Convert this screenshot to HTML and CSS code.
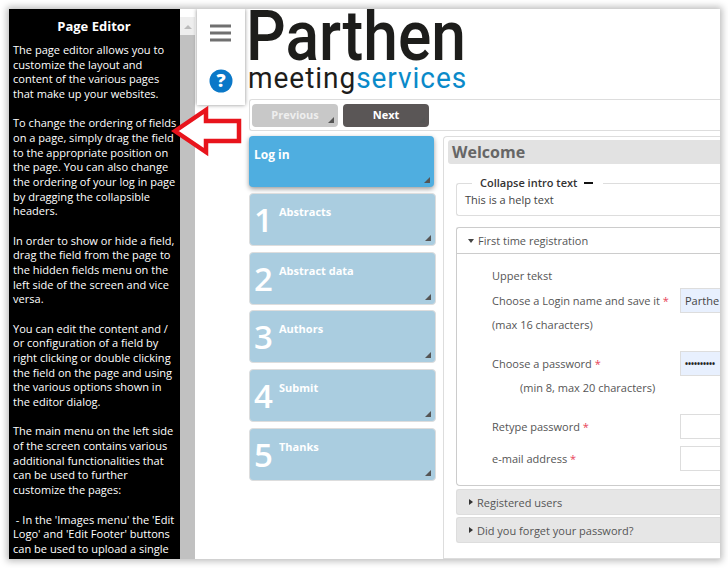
FILE: index.html
```html
<!DOCTYPE html>
<html lang="en">
<head>
<meta charset="utf-8">
<title>Page Editor</title>
<link rel="stylesheet" href="styles.css">
</head>
<body>
<div class="shot">
  <aside class="editor">
    <h1 class="editor-title">Page Editor</h1>
    <p class="editor-text">The page editor allows you to<br>customize the layout and<br>content of the various pages<br>that make up your websites.<br><br>To change the ordering of fields<br>on a page, simply drag the field<br>to the appropriate position on<br>the page. You can also change<br>the ordering of your log in page<br>by dragging the collapsible<br>headers.<br><br>In order to show or hide a field,<br>drag the field from the page to<br>the hidden fields menu on the<br>left side of the screen and vice<br>versa.<br><br>You can edit the content and /<br>or configuration of a field by<br>right clicking or double clicking<br>the field on the page and using<br>the various options shown in<br>the editor dialog.<br><br>The main menu on the left side<br>of the screen contains various<br>additional functionalities that<br>can be used to further<br>customize the pages:<br><br>&nbsp;- In the 'Images menu' the 'Edit<br>Logo' and 'Edit Footer' buttons<br>can be used to upload a single</p>
  </aside>
  <div class="scrollbar">
    <div class="scroll-up"></div>
    <div class="scroll-thumb"></div>
  </div>
  <div class="toolbar">
    <div class="tool tool-menu">
      <svg width="22" height="18" viewBox="0 0 22 18"><path d="M0 2h21M0 9h21M0 16h21" stroke="#707070" stroke-width="3"/></svg>
    </div>
    <div class="tool">
      <svg width="24" height="24" viewBox="0 0 24 24"><circle cx="12" cy="12" r="11.5" fill="#0a78c8"/><text x="12" y="18" class="help-mark" text-anchor="middle">?</text></svg>
    </div>
  </div>
  <div class="page">
    <header class="logo">
      <div class="logo-name">Parthen</div>
      <div class="logo-sub">meeting<span class="logo-blue">services</span></div>
    </header>
    <div class="pager">
      <div class="pager-btn pager-prev">Previous<i class="grip"></i></div>
      <div class="pager-btn pager-next">Next<i class="grip"></i></div>
    </div>
    <div class="columns">
      <nav class="steps">
        <div class="step step-active"><span class="step-label">Log in</span><i class="grip"></i></div>
        <div class="step"><span class="step-num">1</span><span class="step-label">Abstracts</span><i class="grip"></i></div>
        <div class="step"><span class="step-num">2</span><span class="step-label">Abstract data</span><i class="grip"></i></div>
        <div class="step"><span class="step-num">3</span><span class="step-label">Authors</span><i class="grip"></i></div>
        <div class="step"><span class="step-num">4</span><span class="step-label">Submit</span><i class="grip"></i></div>
        <div class="step"><span class="step-num">5</span><span class="step-label">Thanks</span><i class="grip"></i></div>
      </nav>
      <main class="panel">
        <h2 class="panel-title">Welcome</h2>
        <div class="intro">
          <div class="intro-legend">Collapse intro text <b class="dash"></b></div>
          <div class="intro-text">This is a help text</div>
        </div>
        <div class="acc-head"><i class="tri-down"></i>First time registration</div>
        <div class="acc-body">
          <div class="row row-upper"><span>Upper tekst</span></div>
          <div class="row row-login"><span>Choose a Login name and save it <em>*</em></span><div class="input filled">Parthe</div></div>
          <div class="row row-hint"><span>(max 16 characters)</span></div>
          <div class="row row-pass"><span>Choose a password <em>*</em></span><div class="input filled dots">••••••••••</div></div>
          <div class="row row-hint2"><span>(min 8, max 20 characters)</span></div>
          <div class="row row-retype"><span>Retype password <em>*</em></span><div class="input"></div></div>
          <div class="row row-mail"><span>e-mail address <em>*</em></span><div class="input"></div></div>
        </div>
        <div class="acc-closed"><i class="tri-right"></i>Registered users</div>
        <div class="acc-closed"><i class="tri-right"></i>Did you forget your password?</div>
      </main>
    </div>
  </div>
  <svg class="arrow" width="72" height="52" viewBox="0 0 72 52"><path d="M4 26 L35 5 V16 H68 V36 H35 V47 Z" fill="#fff" stroke="#e8141c" stroke-width="4.5"/></svg>
</div>
</body>
</html>
```
FILE: styles.css
```css
* { box-sizing: border-box; }
html, body { margin: 0; height: 100%; background: #fff; overflow: hidden; }
body { padding: 9px 8px 9px 9px; font-family: "Open Sans", "Liberation Sans", sans-serif; font-size: 11px; color: #555; }
.shot { position: relative; display: flex; width: 711px; height: 550px; background: #fff; box-shadow: 0 0 7px 2px rgba(0,0,0,.28); overflow: hidden; }

.editor { flex: 0 0 171px; background: #000; color: #fff; padding: 0 0 0 4px; overflow: hidden; }
.editor-title { margin: 9px 0 0; font-size: 13px; line-height: 17px; font-weight: 700; text-align: center; padding-right: 5px; }
.editor-text { margin: 8px 0 0; font-size: 11.05px; line-height: 14.67px; white-space: nowrap; }

.scrollbar { flex: 0 0 15px; background: #eee; margin-top: 8px; display: flex; flex-direction: column; align-items: center; }
.scroll-up { margin-top: 8px; width: 0; height: 0; border-left: 4px solid transparent; border-right: 4px solid transparent; border-bottom: 4px solid #bbb; }
.scroll-thumb { margin-top: 6px; width: 15px; flex: 1; background: #c1c1c1; }

.toolbar { position: absolute; left: 188px; top: 0; width: 48px; height: 96px; background: #fff; box-shadow: 0 0 4px rgba(0,0,0,.45); z-index: 2; display: flex; flex-direction: column; }
.tool { flex: 1; display: flex; align-items: center; justify-content: center; }
.help-mark { font: 800 18px "Open Sans", sans-serif; fill: #fff; }

.page { flex: 1; min-width: 0; padding-left: 54px; }
.logo { height: 85px; color: #1d1d1b; font-family: "Roboto", sans-serif; overflow: hidden; }
.logo-name { font-size: 70px; line-height: 54px; height: 54px; margin-left: -3px; font-weight: 500; transform: scaleX(.89); transform-origin: left; }
.logo-sub { font-size: 30px; line-height: 30px; letter-spacing: 1px; margin-left: -1px; transform: scaleX(.935); transform-origin: left; }
.logo-blue { color: #0a8ac9; }

.pager { height: 32px; margin-top: 5px; border: 1px solid #ddd; border-radius: 3px 0 0 3px; border-right: 0; padding: 4px 2px; display: flex; gap: 5px; }
.pager-btn { position: relative; width: 86px; height: 23px; border-radius: 4px; text-align: center; color: #fff; font-weight: 700; font-size: 11px; line-height: 22px; }
.pager-prev { background: #c8c8c8; color: #eee; }
.pager-next { background: #5a5656; }

.grip { position: absolute; right: 4px; bottom: 4px; width: 0; height: 0; border-left: 6px solid transparent; border-bottom: 6px solid #555; }

.columns { display: flex; margin-top: 5px; gap: 7px; }
.steps { flex: 0 0 187px; display: flex; flex-direction: column; gap: 5.8px; }
.step { position: relative; height: 53px; background: #aacde0; border: 1px solid #ddd; border-radius: 4px; color: #fff; font-weight: 700; font-size: 11px; display: flex; }
.step-active { width: 185px; height: 51px; background: #4faee0; border: 0; box-shadow: 0 2px 5px rgba(0,0,0,.4); font-size: 12px; padding: 1px 0 0 5px; }
.step-num { font-size: 33px; line-height: 1; font-weight: 600; width: 29px; padding: 9px 0 0 4px; }
.step-label { line-height: 15px; padding-top: 10px; }

.panel { flex: 1; min-width: 0; height: 423px; border: 1px solid #ddd; border-right: 0; border-radius: 4px 0 0 0; padding: 3px 0 0 4px; }
.panel-title { margin: 0; height: 24px; background: #e2e2e2; border-radius: 3px 0 0 3px; font-size: 16px; line-height: 24px; font-weight: 700; color: #666; padding-left: 4px; }
.intro { position: relative; margin: 19px 0 0 8px; height: 33px; border: 1px solid #ddd; border-right: 0; border-radius: 3px 0 0 3px; padding: 8px 0 0 8px; color: #444; line-height: 15px; }
.intro-legend { position: absolute; left: 15px; top: -9px; background: #fff; padding: 0 10px 0 8px; font-weight: 600; color: #333; line-height: 16px; }
.dash { display: inline-block; width: 9px; height: 2px; background: #111; vertical-align: 3px; margin-left: 4px; }
.acc-head { margin: 11px 0 0 8px; height: 27px; border: 1px solid #ccc; border-right: 0; border-radius: 3px 0 0 0; padding-left: 11px; display: flex; align-items: center; }
.tri-down { width: 0; height: 0; border-left: 3px solid transparent; border-right: 3px solid transparent; border-top: 4px solid #444; margin-right: 4px; }
.tri-right { width: 0; height: 0; border-top: 3px solid transparent; border-bottom: 3px solid transparent; border-left: 4px solid #333; margin-right: 4px; }
.acc-body { margin-left: 8px; height: 232px; border: 1px solid #ccc; border-top: 0; border-right: 0; border-radius: 0 0 0 4px; padding-left: 35px; display: flex; flex-direction: column; }
.row { display: flex; align-items: center; height: 24px; position: relative; }
.row span { flex: 0 0 188px; }
.row em { color: #e8435a; font-style: normal; }
.row-upper { margin-top: 9px; }
.row-login { margin-top: 1px; }
.row-pass { margin-top: 15px; }
.row-hint2 span { padding-left: 28px; flex-basis: auto; }
.row-retype { margin-top: 15px; }
.row-mail { margin-top: 8px; }
.input { flex: 0 0 60px; height: 25px; border: 1px solid #ddd; padding: 0 0 0 4px; line-height: 23px; color: #444; }
.filled { background: #e8f0fe; }
.dots { font-size: 8px; font-weight: 700; color: #222; }
.acc-closed { margin: 3px 0 0 8px; height: 26px; background: #e6e6e6; border: 1px solid #ddd; border-right: 0; border-radius: 3px 0 0 3px; padding-left: 12px; display: flex; align-items: center; }
.acc-closed + .acc-closed { margin-top: 2px; }

.arrow { position: absolute; left: 162px; top: 96px; z-index: 3; }
```
